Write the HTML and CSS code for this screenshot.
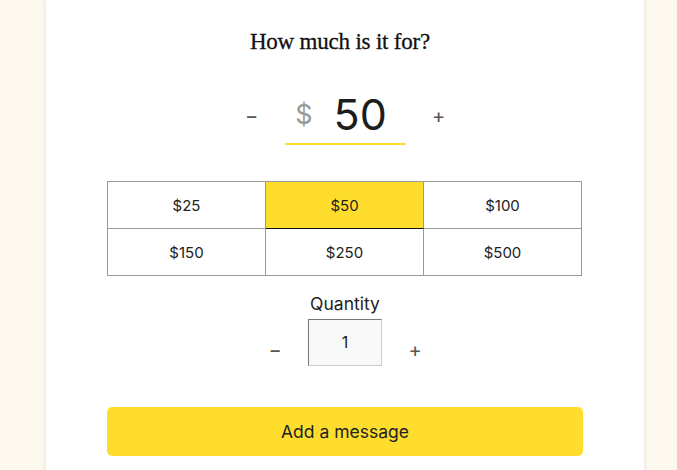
FILE: index.html
```html
<!DOCTYPE html>
<html lang="en">
<head>
  <meta charset="UTF-8" />
  <meta name="viewport" content="width=device-width, initial-scale=1" />
  <title>Gift card amount</title>
  <link rel="stylesheet" href="styles.css">
</head>
<body>
  <div class="card">
    <h1>How much is it for?</h1>

    <div class="amount-row">
      <button class="step" type="button">&minus;</button>
      <div class="amount">
        <span class="currency">$</span>
        <span class="value">50</span>
      </div>
      <button class="step" type="button">+</button>
    </div>

    <div class="presets">
      <div class="preset">$25</div>
      <div class="preset selected">$50</div>
      <div class="preset">$100</div>
      <div class="preset">$150</div>
      <div class="preset">$250</div>
      <div class="preset">$500</div>
    </div>

    <div class="quantity">
      <label for="qty">Quantity</label>
      <div class="qty-row">
        <button class="step" type="button">&minus;</button>
        <div class="qty-box" id="qty">1</div>
        <button class="step" type="button">+</button>
      </div>
    </div>

    <button class="add-message" type="button">Add a message</button>
  </div>
</body>
</html>
```

FILE: styles.css
```css
body {
  margin: 0;
  padding-left: 46px;
  background: #fdf9ee;
  font-family: "Inter", "Liberation Sans", sans-serif;
  color: #222;
  height: 470px;
  overflow: hidden;
}
.card {
  width: 598px;
  height: 480px;
  background: white;
  box-shadow: 0 0 5px rgba(0,0,0,0.12);
  box-sizing: border-box;
  padding-top: 26px;
  display: flex;
  flex-direction: column;
  align-items: center;
}
h1 {
  margin: 0 10px 0 0;
  font-family: "Liberation Serif", "DejaVu Serif", serif;
  font-weight: normal;
  font-size: 23px;
  line-height: 32px;
  color: #111;
  letter-spacing: -0.2px;
  -webkit-text-stroke: 0.3px #111;
}
.step {
  width: 24px;
  padding: 0;
  border: none;
  background: none;
  font-family: "Inter", "Liberation Sans", sans-serif;
  font-size: 20px;
  color: #555;
  cursor: pointer;
}
.amount-row {
  margin-top: 29px;
  display: flex;
  align-items: center;
  gap: 21px;
}
.amount {
  width: 121px;
  height: 58px;
  box-sizing: border-box;
  border-bottom: 2px solid #ffdd2d;
  display: flex;
  align-items: center;
  justify-content: center;
  gap: 21px;
  padding: 0 8px 2px 0;
}
.currency {
  font-size: 27px;
  color: #999;
}
.value {
  font-size: 43px;
  color: #1d1d1d;
}
.presets {
  margin: 36px 1px 0 0;
  width: 475px;
  display: grid;
  grid-template-columns: repeat(3, 1fr);
  border-top: 1px solid #999;
  border-left: 1px solid #999;
  box-sizing: border-box;
}
.preset {
  height: 46px;
  display: flex;
  align-items: center;
  justify-content: center;
  border-right: 1px solid #999;
  border-bottom: 1px solid #999;
  font-size: 15px;
  color: #222;
}
.preset.selected {
  background: #ffdd2d;
  border-bottom-color: #111;
}
.quantity {
  margin-top: 17px;
  display: flex;
  flex-direction: column;
  align-items: center;
}
.quantity label {
  font-size: 17.5px;
  line-height: 22px;
  color: #222;
}
.qty-row {
  margin-top: 4px;
  display: flex;
  align-items: center;
  gap: 21px;
}
.qty-row .step {
  margin-top: 14px;
}
.qty-box {
  width: 74px;
  height: 47px;
  box-sizing: border-box;
  border: 1px solid #ccc;
  border-top-color: #777;
  border-left-color: #777;
  background: #f8f8f8;
  display: flex;
  justify-content: center;
  padding-top: 12px;
  font-size: 16px;
}
.add-message {
  margin-top: 41px;
  width: 476px;
  height: 49px;
  border: none;
  border-radius: 5px;
  background: #ffdd2d;
  font-family: "Inter", "Liberation Sans", sans-serif;
  font-size: 17.5px;
  color: #222;
  cursor: pointer;
}
```
